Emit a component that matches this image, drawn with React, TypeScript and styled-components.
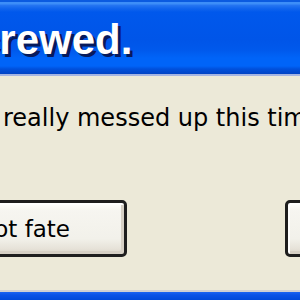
import React from "react";
import styled, { createGlobalStyle } from "styled-components";

const Global = createGlobalStyle`
  html, body { margin: 0; padding: 0; background: #ECE9D8; overflow: hidden; }
  #root { width: 300px; height: 300px; }
`;

const Window = styled.div`
  width: 300px;
  height: 300px;
  display: flex;
  flex-direction: column;
  overflow: hidden;
`;

const TitleBar = styled.div`
  box-sizing: border-box;
  height: 76px;
  flex: none;
  display: flex;
  align-items: flex-start;
  padding-top: 17px;
  overflow: hidden;
  border-bottom: 2px solid #A4B4E2;
  background: linear-gradient(
    to bottom,
    #0B5BE0 0px,
    #0B5BE0 2px,
    #3D8EF8 2px,
    #3D8EF8 4px,
    #2777F2 5px,
    #1467EE 8px,
    #0058EC 12px,
    #0055E8 40px,
    #0059EC 50px,
    #0064F8 58px,
    #0064F8 66px,
    #0050DC 69px,
    #0043C4 74px
  );
`;

const Title = styled.span`
  margin-left: -52px;
  white-space: nowrap;
  font: bold 42px/46px "Liberation Sans", Arial, sans-serif;
  color: #FFFFFF;
  text-shadow: 3px 3px 0 #071A5C;
`;

const Body = styled.div`
  flex: 1;
  display: flex;
  flex-direction: column;
  background: #ECE9D8;
  overflow: hidden;
`;

const Message = styled.div`
  margin-top: 28px;
  padding-left: 3px;
  white-space: nowrap;
  font: 24px/28px "DejaVu Sans", Verdana, sans-serif;
  color: #000000;
`;

const ButtonRow = styled.div`
  margin-top: 68px;
  display: flex;
  justify-content: space-between;
`;

const Button = styled.button<{ $width: number; $offset: number; $side: "left" | "right" }>`
  box-sizing: border-box;
  flex: none;
  width: ${(p) => p.$width}px;
  height: 57px;
  ${(p) => (p.$side === "left" ? `margin-left: ${p.$offset}px;` : `margin-right: ${p.$offset}px;`)}
  border: 3px solid #1E1E1E;
  border-radius: 5px;
  background: linear-gradient(
    to bottom,
    #FFFFFF 0%,
    #F6F5F0 15%,
    #F2F1EA 70%,
    #E6E2D8 90%,
    #D8D2C6 100%
  );
  box-shadow: inset 2px 2px 0 #FFFFFF, inset -3px -3px 0 #D6D0C5;
  display: flex;
  align-items: center;
  justify-content: ${(p) => (p.$side === "left" ? "flex-end" : "center")};
  padding: ${(p) => (p.$side === "left" ? "0 54px 0 0" : "0")};
  font: 23px "DejaVu Sans", Verdana, sans-serif;
  color: #000000;
  white-space: nowrap;
`;

const BottomFrame = styled.div`
  box-sizing: border-box;
  flex: none;
  height: 10px;
  border-top: 2px solid #CFCFD2;
  background: linear-gradient(to bottom, #1B63F2 0px, #0A52E6 3px, #0048DA 8px);
`;

export default function App() {
  return (
    <>
      <Global />
      <Window>
        <TitleBar>
          <Title>Screwed.</Title>
        </TitleBar>
        <Body>
          <Message>really messed up this time.</Message>
          <ButtonRow>
            <Button $side="left" $width={220} $offset={-93}>
              Not fate
            </Button>
            <Button $side="right" $width={100} $offset={-85}>
              OK
            </Button>
          </ButtonRow>
        </Body>
        <BottomFrame />
      </Window>
    </>
  );
}
